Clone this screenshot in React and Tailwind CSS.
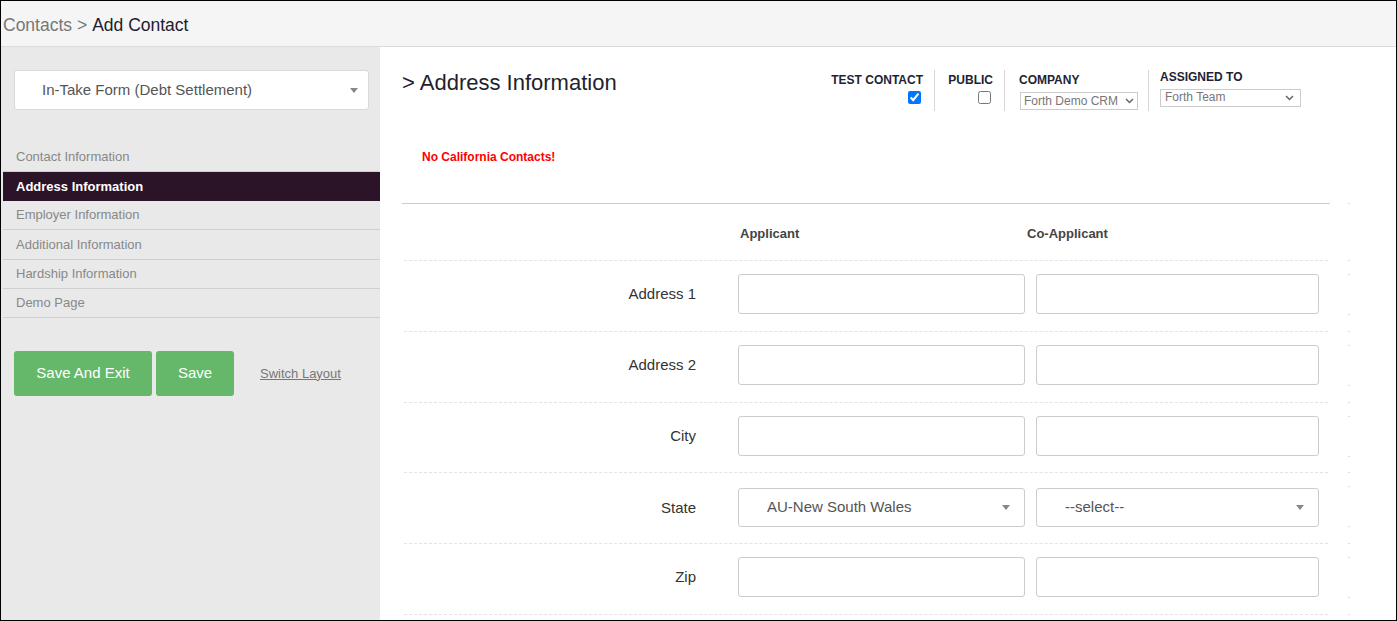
import React from "react";

function Caret({ className = "" }) {
  return (
    <svg width="8" height="5" viewBox="0 0 8 5" className={className}>
      <path d="M0 0 L8 0 L4 5 Z" fill="#888" />
    </svg>
  );
}

function Chevron() {
  return (
    <svg width="9" height="6" viewBox="0 0 9 6">
      <path d="M1 1 L4.5 4.5 L8 1" stroke="#666" strokeWidth="1.5" fill="none" />
    </svg>
  );
}

function Input() {
  return <div className="h-[40px] bg-white border border-[#ccc] rounded-[3px]" />;
}

function FakeSelect({ value }) {
  return (
    <div className="h-[39px] bg-white border border-[#ccc] rounded-[3px] flex items-center pl-[28px] pr-[14px]">
      <span className="flex-1 text-[15px] text-[#555]">{value}</span>
      <Caret />
    </div>
  );
}

function SideDash() {
  return (
    <div className="ml-[20px] w-[2px] border-b border-dashed border-[#ddd] flex items-start">
      <div className="w-[2px] mt-[13px] h-[41px] border-y border-[#ddd]" />
    </div>
  );
}

function Row({ label, left, right, pt = "pt-[13px]", h = "h-[71px]" }) {
  return (
    <div className="flex">
      <div className={`w-[924px] ${h} ${pt} border-b border-dashed border-[#e3e3e3] flex items-start`}>
        <div className="w-[292px] h-[40px] flex items-center justify-end text-[15px] text-[#333]">{label}</div>
        <div className="ml-[42px] w-[287px]">{left}</div>
        <div className="ml-[11px] w-[283px]">{right}</div>
      </div>
      <SideDash />
    </div>
  );
}

export default function App() {
  const nav = [
    "Contact Information",
    "Address Information",
    "Employer Information",
    "Additional Information",
    "Hardship Information",
    "Demo Page",
  ];
  return (
    <div
      className="w-[1397px] h-[621px] border border-black overflow-hidden flex flex-col bg-white"
      style={{ fontFamily: '"Liberation Sans", Arial, sans-serif' }}
    >
      {/* Header */}
      <div className="h-[46px] shrink-0 bg-[#f5f5f5] border-b border-[#dcdcdc] flex items-center pl-[2px] pt-[4px] text-[17.5px]">
        <span className="text-[#777]">Contacts &gt;</span>
        <span className="text-[#1f1b2e] ml-[5px]">Add Contact</span>
      </div>

      <div className="flex flex-1 min-h-0">
        {/* Sidebar */}
        <div className="w-[379px] shrink-0 bg-[#e9e9e9] flex flex-col">
          <div className="mt-[23px] ml-[13px] w-[355px] h-[40px] bg-white border border-[#d9d9d9] rounded-[3px] flex items-center pl-[27px] pr-[10px]">
            <span className="flex-1 text-[15px] text-[#555]">In-Take Form (Debt Settlement)</span>
            <Caret />
          </div>

          <div className="mt-[33px] ml-[2px] flex flex-col">
            {nav.map((n, i) =>
              i === 1 ? (
                <div key={n} className="h-[29px] bg-[#2b1328] flex items-center pl-[13px] text-[13px] font-bold text-white">
                  {n}
                </div>
              ) : (
                <div
                  key={n}
                  className={`${i === 3 ? "h-[30px]" : "h-[29px]"} border-b border-[#cfcfcf] flex items-center pl-[13px] text-[13px] text-[#888]`}
                >
                  {n}
                </div>
              )
            )}
          </div>

          <div className="mt-[33px] ml-[13px] flex items-center">
            <button className="w-[138px] h-[45px] bg-[#65b86a] rounded-[3px] text-white text-[15px]">Save And Exit</button>
            <button className="ml-[4px] w-[78px] h-[45px] bg-[#65b86a] rounded-[3px] text-white text-[15px]">Save</button>
            <span className="ml-[26px] text-[13px] text-[#777] underline">Switch Layout</span>
          </div>
        </div>

        {/* Main */}
        <div className="flex-1 pl-[22px] pt-[23px]">
          <div className="w-[928px] flex items-start">
            <div className="text-[22px] text-[#221f2e] leading-[26px]">&gt; Address Information</div>
            <div className="ml-auto mr-[29px] flex items-start">
              <div className="w-[104px] h-[41px] border-r border-[#d6d6d6] pr-[11px] pt-[3px] flex flex-col items-end">
                <span className="text-[12px] font-bold text-[#221f36] leading-[14px]">TEST CONTACT</span>
                <input type="checkbox" defaultChecked className="mt-[4px] mr-[2px] w-[13px] h-[13px]" />
              </div>
              <div className="w-[70px] h-[41px] border-r border-[#d6d6d6] pr-[11px] pt-[3px] flex flex-col items-end">
                <span className="text-[12px] font-bold text-[#221f36] leading-[14px]">PUBLIC</span>
                <input type="checkbox" className="mt-[4px] mr-[2px] w-[13px] h-[13px]" />
              </div>
              <div className="w-[144px] h-[41px] border-r border-[#d6d6d6] pl-[14px] pt-[3px] flex flex-col">
                <span className="text-[12px] font-bold text-[#221f36] leading-[14px]">COMPANY</span>
                <div className="mt-[5px] ml-[1px] w-[118px] h-[18px] border border-[#ccc] flex items-center pl-[3px] pr-[3px]">
                  <span className="flex-1 text-[12px] text-[#777] leading-[14px] whitespace-nowrap overflow-hidden">Forth Demo CRM</span>
                  <Chevron />
                </div>
              </div>
              <div className="pl-[11px] flex flex-col">
                <span className="text-[12px] font-bold text-[#221f36] leading-[14px]">ASSIGNED TO</span>
                <div className="mt-[5px] w-[141px] h-[18px] border border-[#ccc] flex items-center pl-[4px] pr-[6px]">
                  <span className="flex-1 text-[12px] text-[#777] leading-[14px] -mt-[2px]">Forth Team</span>
                  <Chevron />
                </div>
              </div>
            </div>
          </div>

          <div className="mt-[39px] pl-[20px] text-[12px] font-bold text-[#ff0000] leading-[14px]">No California Contacts!</div>

          <div className="mt-[39px] flex">
            <div className="w-[928px] border-b border-[#cccccc]" />
            <div className="ml-[18px] w-[2px] border-b border-[#ddd]" />
          </div>

          <div className="ml-[2px]">
            <div className="flex">
              <div className="w-[924px] h-[57px] pt-[4px] border-b border-dashed border-[#e3e3e3] flex items-center text-[13px] font-bold text-[#444]">
                <div className="w-[292px]" />
                <div className="ml-[44px] w-[285px]">Applicant</div>
                <div className="ml-[2px]">Co-Applicant</div>
              </div>
              <div className="ml-[20px] w-[2px] border-b border-dashed border-[#ddd]" />
            </div>
            <Row label="Address 1" left={<Input />} right={<Input />} />
            <Row label="Address 2" left={<Input />} right={<Input />} />
            <Row label="City" h="h-[70px]" left={<Input />} right={<Input />} />
            <Row
              label="State"
              pt="pt-[15px]"
              left={<FakeSelect value="AU-New South Wales" />}
              right={<FakeSelect value="--select--" />}
            />
            <Row label="Zip" left={<Input />} right={<Input />} />
          </div>
        </div>
      </div>
    </div>
  );
}
